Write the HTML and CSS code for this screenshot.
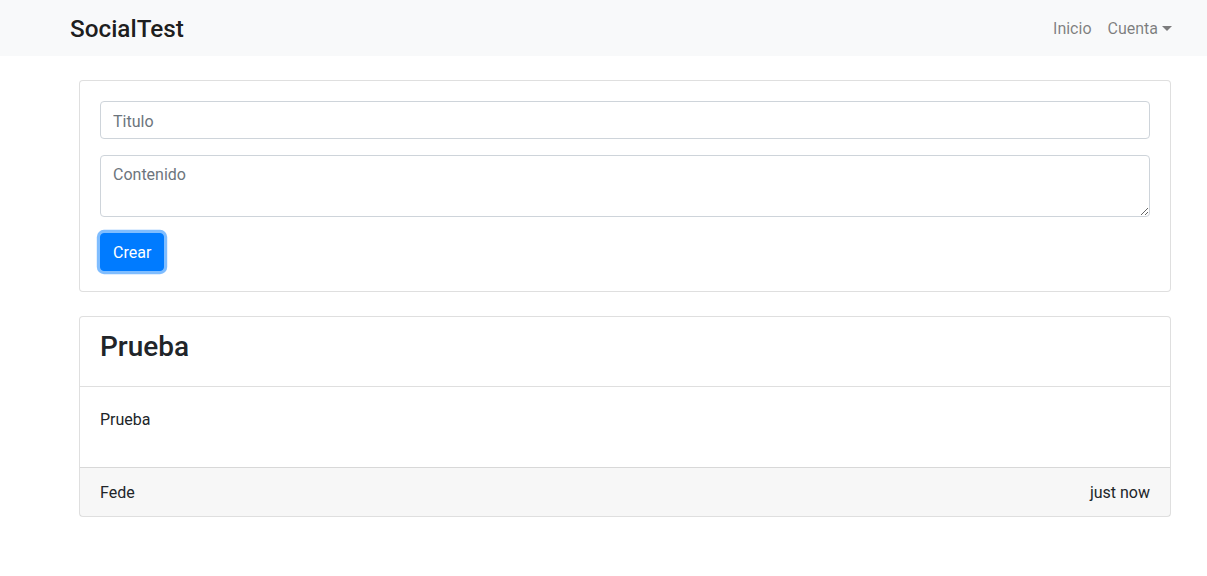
FILE: index.html
```html
<!DOCTYPE html>
<html lang="es">
<head>
<meta charset="utf-8">
<title>SocialTest</title>
<link rel="stylesheet" href="styles.css">
</head>
<body>
<nav class="navbar">
  <a class="brand" href="#">SocialTest</a>
  <ul class="nav">
    <li><a class="nav-link" href="#">Inicio</a></li>
    <li><a class="nav-link dropdown" href="#">Cuenta<span class="caret"></span></a></li>
  </ul>
</nav>
<main class="main">
  <section class="card">
    <form class="card-body">
      <div class="form-group">
        <input class="form-control" type="text" placeholder="Titulo">
      </div>
      <div class="form-group">
        <textarea class="form-control textarea" rows="2" placeholder="Contenido"></textarea>
      </div>
      <button class="btn" type="button">Crear</button>
    </form>
  </section>
  <section class="card post">
    <div class="card-header"><h2 class="post-title">Prueba</h2></div>
    <div class="card-body post-body"><p class="post-text">Prueba</p></div>
    <div class="card-footer"><span>Fede</span><span>just now</span></div>
  </section>
</main>
</body>
</html>
```

FILE: styles.css
```css
* { box-sizing: border-box; }
html, body { margin: 0; }
body {
  font-family: Roboto, "Liberation Sans", Arial, sans-serif;
  font-size: 16px;
  line-height: 1.5;
  color: #212529;
  background: #fff;
}
.navbar {
  height: 56px;
  background: #f8f9fa;
  display: flex;
  align-items: center;
  justify-content: space-between;
  padding: 0 27px 0 70px;
}
.brand {
  font-size: 24.3px;
  font-weight: 500;
  color: rgba(0,0,0,.9);
  text-decoration: none;
  line-height: 1.5;
  margin-top: 2px;
}
.nav {
  list-style: none;
  margin: 1px 0 0;
  padding: 0;
  display: flex;
}
.nav-link {
  display: block;
  padding: 8px;
  color: rgba(0,0,0,.5);
  text-decoration: none;
}
.caret {
  display: inline-block;
  margin-left: 4px;
  vertical-align: 3px;
  border-top: 5px solid;
  border-right: 5px solid transparent;
  border-left: 5px solid transparent;
}
.main {
  padding: 24px 36px 0 79px;
}
.card {
  border: 1px solid rgba(0,0,0,.125);
  border-radius: 4px;
  background: #fff;
  margin-bottom: 24px;
}
.card-body { padding: 20px; }
.post-body { padding: 21px 20px 20px; }
.form-group { margin-bottom: 16px; }
.form-control {
  display: block;
  width: 100%;
  height: 38px;
  padding: 7px 12px 5px;
  font: inherit;
  line-height: 1.5;
  color: #495057;
  border: 1px solid #ced4da;
  border-radius: 4px;
  background: #fff;
}
.form-control::placeholder { color: #6c757d; opacity: 1; }
.textarea { height: 62px; resize: vertical; margin: 0; }
.btn {
  display: block;
  font: inherit;
  line-height: 1.5;
  padding: 7px 12px 5px;
  color: #fff;
  background: #007bff;
  border: 1px solid #007bff;
  border-radius: 4px;
  box-shadow: 0 0 0 3.2px rgba(0,123,255,.5);
}
.card-header {
  padding: 13px 20px 12px;
  border-bottom: 1px solid rgba(0,0,0,.125);
}
.post-title {
  margin: 0 0 10.4px;
  font-size: 28px;
  font-weight: 500;
  line-height: 1.2;
}
.post-text { margin: 0 0 15px; }
.card-footer {
  display: flex;
  justify-content: space-between;
  padding: 13px 20px 11px;
  background: rgba(0,0,0,.03);
  border-top: 1px solid rgba(0,0,0,.125);
}
```
